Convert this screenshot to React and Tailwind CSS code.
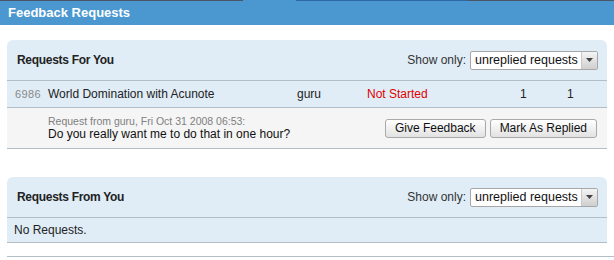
import React from "react";

const font = { fontFamily: '"Liberation Sans", Arial, sans-serif' };

// --- small select lookalike ---
const ShowOnly = () => (
  <div className="flex items-center gap-[4px] text-[12px] text-[#333]">
    <span>Show only:</span>
    <div className="flex h-[19px] w-[128px] items-stretch rounded-[2px] border border-[#a7a7a7] bg-white">
      <span className="flex-1 pl-[4px] text-[12.5px] leading-[17px] text-[#111]">unreplied requests</span>
      <span className="flex w-[16px] items-center justify-center border-l border-[#c9c9c9] bg-gradient-to-b from-[#f4f4f4] to-[#cfcfcf]">
        <svg width="7" height="4" viewBox="0 0 7 4">
          <path d="M0 0 H7 L3.5 4 Z" fill="#444" />
        </svg>
      </span>
    </div>
  </div>
);

const Btn = ({ children }) => (
  <button className="h-[19px] rounded-[3px] border border-[#a9a9a9] bg-gradient-to-b from-white to-[#e2e2e2] px-[9px] text-[12px] leading-[17px] text-[#111]">
    {children}
  </button>
);

const PanelHeader = ({ title }) => (
  <div className="flex h-[40px] items-center justify-between pl-[10px] pr-[9px]">
    <h3 className="text-[12px] font-bold tracking-[-0.3px] text-[#222]">{title}</h3>
    <ShowOnly />
  </div>
);

export default function App() {
  return (
    <div className="h-[260px] w-[614px] bg-white" style={font}>
      {/* tab strip edge */}
      <div className="flex h-[1px]">
        <div className="w-[243px] bg-[#4a5566]" />
        <div className="w-[53px] bg-[#4a98cf]" />
        <div className="w-[172px] bg-[#2d68a3]" />
        <div className="flex-1 bg-[#4a5566]" />
      </div>
      <div className="flex h-[24px] items-center bg-[#4a98cf] pl-[8px]">
        <h1 className="text-[13px] font-bold text-white">Feedback Requests</h1>
      </div>

      <div className="pl-[7px] pr-[7px] pt-[15px]">
        {/* Requests For You */}
        <div className="rounded-t-[6px] bg-[#e0edf7]">
          <PanelHeader title="Requests For You" />
          <div className="flex h-[28px] items-center border-y border-[#b3bec7] text-[12px] text-[#222]">
            <span className="w-[41px] pl-[8px] text-[11px] tracking-[0.4px] text-[#888]">6986</span>
            <span className="w-[249px]">World Domination with Acunote</span>
            <span className="w-[70px]">guru</span>
            <span className="w-[153px] text-[#e00000]">Not Started</span>
            <span className="w-[47px]">1</span>
            <span>1</span>
          </div>
          <div className="flex h-[41px] items-center justify-between border-b border-[#b3bec7] bg-[#f5f5f5] pl-[41px] pr-[10px]">
            <div className="leading-[13px]">
              <p className="text-[10.5px] text-[#808080]">Request from guru, Fri Oct 31 2008 06:53:</p>
              <p className="text-[12px] text-[#111]">Do you really want me to do that in one hour?</p>
            </div>
            <div className="flex gap-[4px]">
              <Btn>Give Feedback</Btn>
              <Btn>Mark As Replied</Btn>
            </div>
          </div>
        </div>

        {/* Requests From You */}
        <div className="mt-[28px] rounded-t-[6px] bg-[#e0edf7]">
          <PanelHeader title="Requests From You" />
          <div className="flex h-[26px] items-center border-y border-[#b3bec7] pl-[7px] text-[12px] text-[#222]">
            No Requests.
          </div>
        </div>
        <div className="mr-[-7px] mt-[13px] h-[1px] bg-[#b3bec7]" />
      </div>
    </div>
  );
}
